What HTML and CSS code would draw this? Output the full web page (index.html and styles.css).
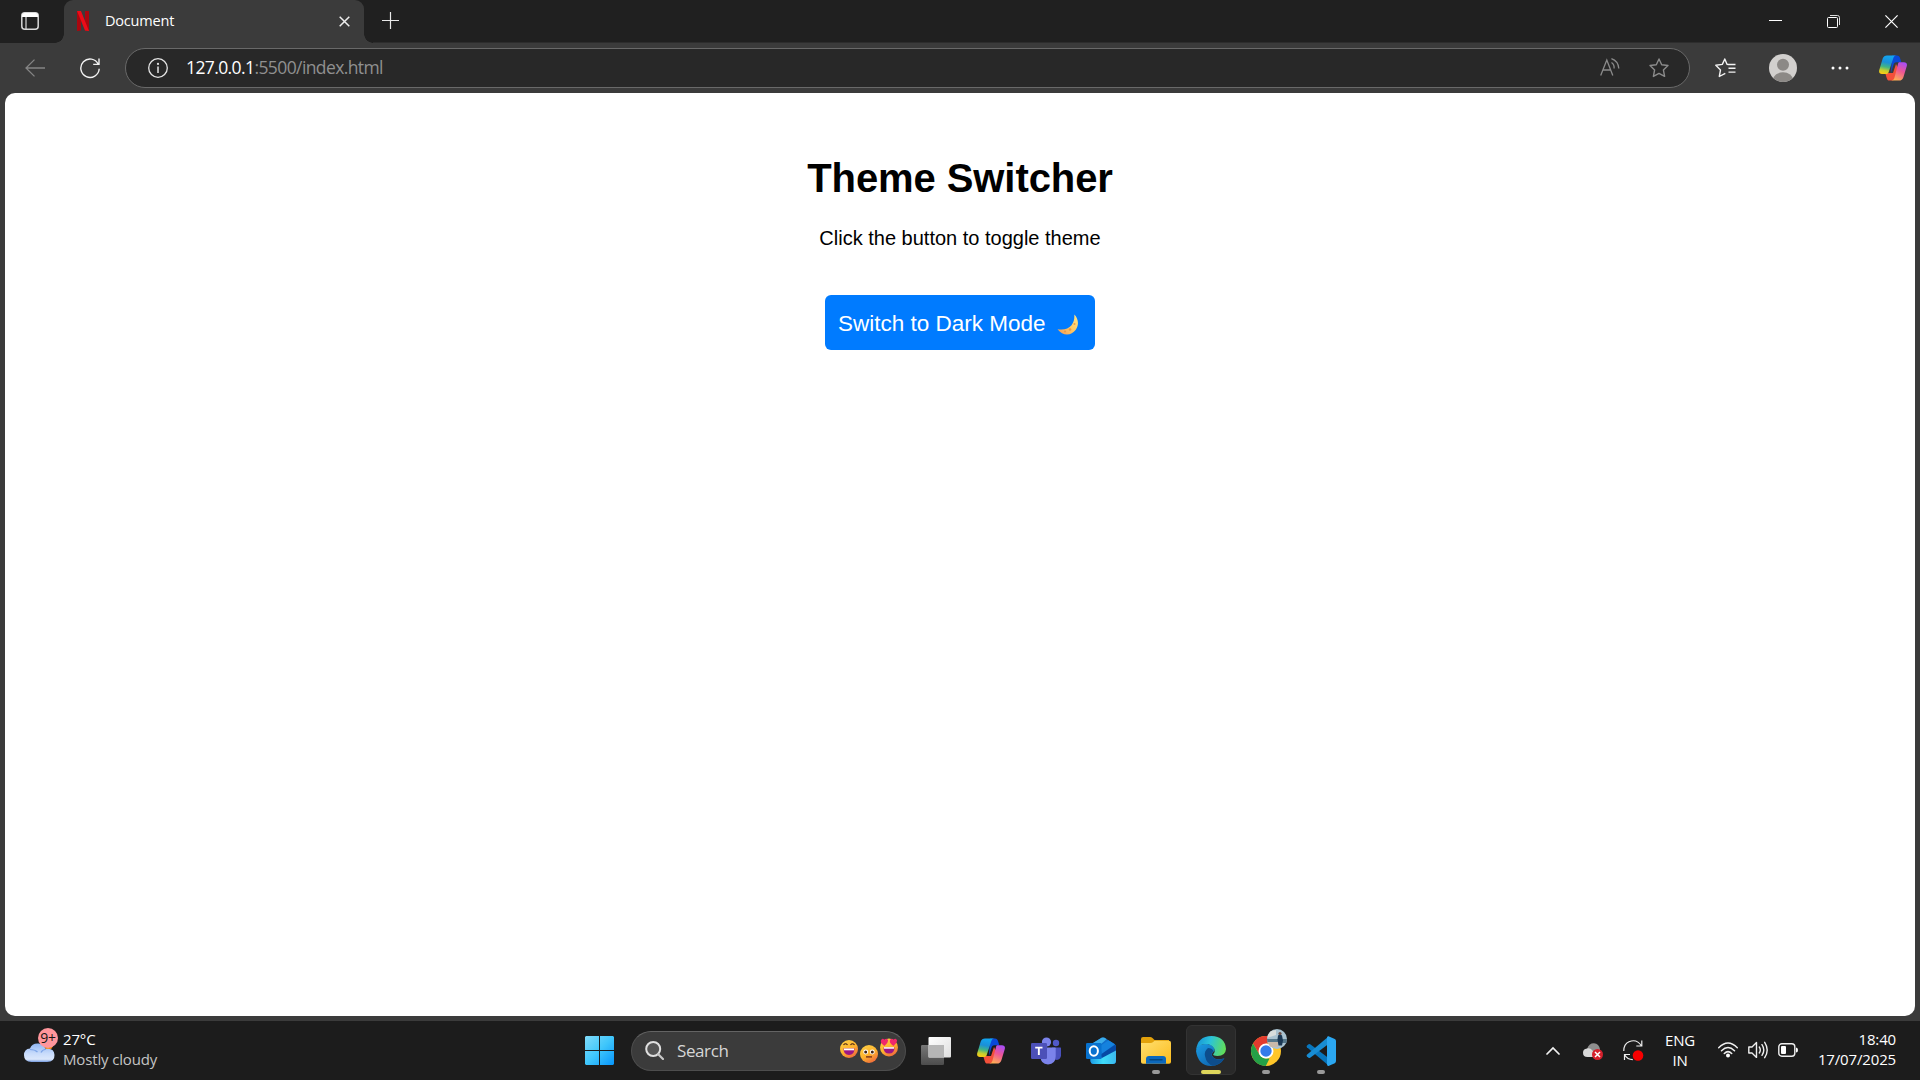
FILE: index.html
```html
<!DOCTYPE html>
<html lang="en">
<head>
<meta charset="utf-8">
<title>Document</title>
<link rel="stylesheet" href="styles.css">
</head>
<body>
<svg class="defs" width="0" height="0" aria-hidden="true">
  <defs>
    <linearGradient id="cpA" x1="0.4" y1="0" x2="0.2" y2="1"><stop offset="0" stop-color="#12a5f0"/><stop offset=".35" stop-color="#1b8fd8"/><stop offset=".6" stop-color="#43b582"/><stop offset=".8" stop-color="#c6cf2e"/><stop offset="1" stop-color="#ffcb12"/></linearGradient>
    <linearGradient id="cpB" x1="0.7" y1="0" x2="0.3" y2="1"><stop offset="0" stop-color="#a94df5"/><stop offset=".45" stop-color="#ee5694"/><stop offset="1" stop-color="#ffb152"/></linearGradient>
    <linearGradient id="face" x1="0" y1="0" x2="0.6" y2="1"><stop offset="0" stop-color="#ffd348"/><stop offset=".6" stop-color="#fdb22d"/><stop offset="1" stop-color="#f0703c"/></linearGradient>
    <linearGradient id="win" x1="0" y1="0" x2="1" y2="1"><stop offset="0" stop-color="#81dcfa"/><stop offset=".5" stop-color="#3fc6fb"/><stop offset="1" stop-color="#0795fb"/></linearGradient>
    <linearGradient id="cloud" x1="0" y1="0" x2="0" y2="1"><stop offset="0" stop-color="#90b5f2"/><stop offset=".55" stop-color="#c9dcfb"/><stop offset=".85" stop-color="#dbe7fb"/><stop offset="1" stop-color="#7299de"/></linearGradient>
    <linearGradient id="moon" x1="1" y1="0" x2="0" y2="1"><stop offset="0" stop-color="#ffe88c"/><stop offset=".5" stop-color="#ffc964"/><stop offset="1" stop-color="#f59b55"/></linearGradient>
    <linearGradient id="folder" x1="0" y1="0" x2="1" y2="1"><stop offset="0" stop-color="#ffdf70"/><stop offset="1" stop-color="#fcbc1c"/></linearGradient>
    <linearGradient id="edgeTop" x1="0" y1="0.3" x2="1" y2="0.5"><stop offset="0" stop-color="#1793d8"/><stop offset=".45" stop-color="#2bc3d9"/><stop offset="1" stop-color="#62dd58"/></linearGradient>
    <linearGradient id="edgeLow" x1="0" y1="0" x2="1" y2="1"><stop offset="0" stop-color="#1b9be3"/><stop offset="1" stop-color="#0c59a4"/></linearGradient>
    <linearGradient id="olLow" x1="0" y1="0" x2="1" y2="0"><stop offset="0" stop-color="#1b9ae4"/><stop offset=".5" stop-color="#3fdcfa"/><stop offset="1" stop-color="#3bb8ee"/></linearGradient>
    <linearGradient id="tv" x1="0" y1="0" x2="1" y2="1"><stop offset="0" stop-color="#fff"/><stop offset="1" stop-color="#dedede"/></linearGradient>
    <linearGradient id="tvBack" x1="0" y1="0" x2="0" y2="1"><stop offset="0" stop-color="#777"/><stop offset="1" stop-color="#4c4c4c"/></linearGradient>
    <symbol id="copilot" viewBox="0 0 28 26">
      <path fill="#0a48d8" d="M13 .4h5c1.700 0 2.600 1 3.200 3l1.100 3.800h-4.800c-2 0-2.600 1.200-3.200 3L12 18z"/>
      <path fill="#f3503a" d="M8 18h6l3-9 2 4-3 10c-.6 1.600-1.700 2.600-3.600 2.600h-2c-1.600 0-2.200-1-2.700-2.600L6.500 19z"/>
      <path fill="url(#cpA)" d="M8 .4h9.500c-2 0-2.700 1.100-3.300 3L9.700 17c-.5 1.400-1.200 2-2.700 2H3C.8 19-.3 17.600.2 15.300L3.700 3.600C4.400 1.300 5.900.4 8 .4z"/>
      <path fill="url(#cpB)" d="M20.500 7.200H25c2.300 0 3.400 1.500 2.800 3.800l-3.400 11.200c-.8 2.400-2.200 3.400-4.400 3.400h-8c2 0 2.900-1 3.500-3L19 9c.3-1.200.6-1.800 1.500-1.800z"/>
    </symbol>
  </defs>
</svg>

<header class="tabstrip">
  <div class="workspaces"><svg width="18" height="18" viewBox="0 0 18 18"><rect x=".8" y=".8" width="16.400" height="16.400" rx="3" fill="none" stroke="#d8d8d8" stroke-width="1.500"/><path d="M1 5V3.500Q1 1 3.500 1h11Q17 1 17 3.500V5z" fill="#fff"/><path d="M5 5v12" stroke="#d8d8d8" stroke-width="1.200"/></svg></div>
  <div class="tab">
    <svg class="favicon" width="12" height="20" viewBox="0 0 12 20"><path fill="#a9070f" d="M0 0h4v19.500L0 20zM8 0h4v20l-4-.5z"/><path fill="#ed0c18" d="M0 0h4l8 20-4-.5z"/></svg>
    <span class="tab-title">Document</span>
    <svg class="tab-close" width="11" height="11" viewBox="0 0 11 11"><path d="M.7.700l9.600 9.600M10.300.700L.7 10.300" stroke="#eee" stroke-width="1.500"/></svg>
  </div>
  <svg class="new-tab" width="17" height="17" viewBox="0 0 17 17"><path d="M8.500 0v17M0 8.500h17" stroke="#e8e8e8" stroke-width="1.200"/></svg>
  <div class="window-controls">
    <svg width="13" height="13" viewBox="0 0 13 13"><path d="M0 5.500h13" stroke="#fff"/></svg>
    <svg width="13" height="13" viewBox="0 0 13 13"><rect x=".5" y="2.500" width="10" height="10" rx="1" fill="none" stroke="#fff"/><path d="M3 .5h7.500q2 0 2 2V10" fill="none" stroke="#ddd"/></svg>
    <svg width="13" height="13" viewBox="0 0 13 13"><path d="M.4.400l12.200 12.200M12.600.400L.4 12.600" stroke="#fff" stroke-width="1.200"/></svg>
  </div>
</header>

<nav class="toolbar">
  <svg class="back" width="20" height="18" viewBox="0 0 20 18"><path d="M20 9H1M9.500.600L1 9l8.500 8.400" fill="none" stroke="#858585" stroke-width="1.300"/></svg>
  <svg class="reload" width="20" height="21" viewBox="0 0 20 21"><path d="M18.300 6.200A9.200 9.200 0 1 0 19.200 10.800M19 .6v5.800h-5.800" fill="none" stroke="#f2f2f2" stroke-width="1.400"/></svg>
  <div class="address">
    <svg class="info" width="20" height="20" viewBox="0 0 20 20"><circle cx="10" cy="10" r="9.300" fill="none" stroke="#e5e5e5" stroke-width="1.300"/><path d="M10 8.500V15" stroke="#e5e5e5" stroke-width="1.500"/><circle cx="10" cy="5.900" r="1.100" fill="#e5e5e5"/></svg>
    <span class="url"><span class="host">127.0.0.1</span>:5500/index.html</span>
    <svg class="read" width="20" height="18" viewBox="0 0 20 18"><path d="M.7 17.500L6.800 2l6 15.500M2.900 12h7.700M11.500 4.500q3 2 2.600 6M11.400.700q6.800 2.300 7.400 9.800" fill="none" stroke="#8b8b8b" stroke-width="1.300"/></svg>
    <svg class="fav" width="20" height="20" viewBox="0 0 20 20"><path d="M10 1l2.700 5.700 6.300.8-4.600 4.400 1.200 6.500-5.600-3-5.600 3 1.200-6.500L1 7.500l6.300-.8z" fill="none" stroke="#8b8b8b" stroke-width="1.400" stroke-linejoin="round"/></svg>
  </div>
  <svg class="favorites" width="21" height="20" viewBox="0 0 21 20"><path d="M13.500 6.500L12 6.200 9.800 1 7.300 6.400.8 7.300l4.700 4.600-1.200 6.600 6-3.200M13 6.500h7.500M13.500 10.300h7M13.500 14.100h7" fill="none" stroke="#f2f2f2" stroke-width="1.400" stroke-linejoin="round"/></svg>
  <svg class="profile" width="28" height="28" viewBox="0 0 28 28"><clipPath id="pc"><circle cx="14" cy="14" r="14"/></clipPath><g clip-path="url(#pc)"><path fill="#d2d0ce" d="M0 0h28v28H0z"/><circle cx="14" cy="10.700" r="6" fill="#8c8986"/><ellipse cx="14" cy="26" rx="10" ry="7.700" fill="#8c8986"/></g></svg>
  <svg class="more" width="18" height="4" viewBox="0 0 18 4"><g fill="#fff"><circle cx="2" cy="2" r="1.500"/><circle cx="9" cy="2" r="1.500"/><circle cx="16" cy="2" r="1.500"/></g></svg>
  <svg class="copilot-side" width="28" height="26"><use href="#copilot"/></svg>
</nav>

<main class="page">
  <h1>Theme Switcher</h1>
  <p>Click the button to toggle theme</p>
  <button class="toggle" type="button"><span>Switch to Dark Mode</span><svg width="22" height="22" viewBox="0 0 22 22"><path fill="url(#moon)" d="M17.300.5C21.500 4.500 22.300 11 18.600 16 14.600 21.500 6 22.600.5 15.200 6.500 16.400 11.500 15 14.500 11.300 17 8 17.600 4.500 17.300.5z"/><g fill="#e99a4b"><circle cx="8" cy="17.500" r="1.100"/><circle cx="13" cy="15.500" r="1.300"/><circle cx="17.500" cy="10" r="1"/></g></svg></button>
</main>

<footer class="taskbar">
  <div class="weather">
    <div class="weather-icon">
      <svg width="32" height="36" viewBox="0 0 32 36"><circle cx="24.500" cy="18" r="4.500" fill="#f88a18"/><path fill="url(#cloud)" d="M7.500 35Q0 35 0 28.300 0 22 6 21.500 8 16 14.500 16.500 20 17 21.500 22q8.500-1.500 9 6 .2 7-7.500 7z"/><path d="M6 22.500q5 0 7.500 2.500M22 22q-4 1-5 3.500" fill="none" stroke="#7da5e8" stroke-width="1.200"/></svg>
      <span class="badge">9+</span>
    </div>
    <div class="weather-text"><span>27°C</span><span class="muted">Mostly cloudy</span></div>
  </div>

  <div class="apps">
    <div class="app"><svg width="29" height="29" viewBox="0 0 29 29"><path fill="url(#win)" d="M1 0h13v14H0V1zM15 0h13l1 1v13H15zM0 15h14v14H1l-1-1zM15 15h14v13l-1 1H15z"/></svg></div>
    <div class="search">
      <svg width="19" height="19" viewBox="0 0 19 19"><circle cx="8.200" cy="8" r="7" fill="#555" stroke="#e0e0e0" stroke-width="2"/><path d="M13 13l5 5" stroke="#c8c8c8" stroke-width="2.200" stroke-linecap="round"/></svg>
      <span>Search</span>
      <svg class="emojis" width="58" height="26" viewBox="0 0 58 26">
        <circle cx="9" cy="11" r="9" fill="url(#face)"/><path d="M3.500 7q2-2.500 4 0M10.500 7q2-2.500 4 0" fill="none" stroke="#4a2413" stroke-width="1.200"/><path fill="#9c1685" d="M3.500 10.500h11Q14.500 17 9 17t-5.500-6.500z"/><path fill="#fff" d="M4 10.500h10v1.800H4z"/>
        <circle cx="29" cy="16" r="9" fill="url(#face)"/><circle cx="25.700" cy="14" r="2.400" fill="#fff"/><circle cx="32.300" cy="14" r="2.400" fill="#fff"/><circle cx="25.700" cy="14" r="1.500" fill="#402518"/><circle cx="32.300" cy="14" r="1.500" fill="#402518"/><path d="M26 18.900h6" stroke="#6b2a18" stroke-width="1.300"/>
        <circle cx="49" cy="9.500" r="9" fill="url(#face)"/><path fill="#9c1685" d="M43.500 9.500h11Q54.500 15.500 49 15.500t-5.500-6z"/><path fill="#fff" d="M44 9.200h10v1.500H44z"/><path fill="#f0276c" d="M44.500 8Q40 4.800 41 2.200 42.700-.5 44.500 1.800 46.800-.5 48 2.200 48.500 5 44.500 8zM53.500 8Q49 4.800 50 2.200 51.500-.5 53.500 1.800 55.500-.5 57 2.200 57.500 5 53.500 8z"/>
      </svg>
    </div>
    <div class="app"><svg width="30" height="28" viewBox="0 0 30 28"><rect y="8" width="23" height="20" rx="1.200" fill="url(#tvBack)"/><rect x="7.500" width="22.500" height="20.500" rx="1" fill="url(#tv)"/><path d="M7.500 8H23v12.500H7.500z" fill="#b6b6b6"/></svg></div>
    <div class="app"><svg width="28" height="26"><use href="#copilot"/></svg></div>
    <div class="app"><svg width="30" height="28" viewBox="0 0 30 28"><circle cx="25" cy="6" r="3.200" fill="#5059c9"/><path fill="#4950bd" d="M21 10.500h8.500q.5 0 .5.800v7Q30 23 24.500 23z"/><circle cx="15.500" cy="5" r="4.600" fill="#7b83eb"/><path fill="#7b83eb" d="M10 10.500h14q.7 0 .7.700V19q0 8-7.700 8.500-7.500-.5-7.500-8z"/><rect y="6" width="16" height="16" rx="1.200" fill="#4c50b8"/><path fill="#fff" d="M4.200 9.800h7.300v1.800H8.800V18H6.900v-6.400H4.200z"/></svg></div>
    <div class="app"><svg width="30" height="28" viewBox="0 0 30 28"><clipPath id="ol"><path d="M4.500 9q0-1.500 1.300-2.300L15.500.8Q17 .1 18.500.8l10 6.200Q30 8 30 10v13.500q0 3.500-3.500 3.500H8q-3.500 0-3.500-3.500z"/></clipPath><g clip-path="url(#ol)"><path fill="#1270cc" d="M4 0h26v28H4z"/><path fill="#3aaceb" d="M4 10V0h19L10 11.500z"/><path fill="#1582de" d="M14 9L24.500 2l6 4L16 17z"/><path fill="#0649a5" d="M14 18L30 7v8L17 22z"/><path fill="url(#olLow)" d="M4 21.500h11L30 13.500V28H4z"/></g><rect y="6" width="15.500" height="16" rx="1.300" fill="#0872cf"/><ellipse cx="7.800" cy="14" rx="4.100" ry="4.700" fill="none" stroke="#fff" stroke-width="2"/></svg></div>
    <div class="app running"><svg width="30" height="27" viewBox="0 0 30 27"><path fill="#e2a10b" d="M0 2Q0 0 2 0h7q1.500 0 2.500 1l2 2H28v8H0z"/><path fill="url(#folder)" d="M0 6h9.500q1.500 0 2.700-1l1.300-1.200H28q2 0 2 2V25q0 1.700-2 1.700H2Q0 26.700 0 25z"/><path fill="#0c68bc" d="M5 26.700V22q0-3 3-3h14q3 0 3 3v4.700z"/><path d="M9 22.700h12" stroke="#054780" stroke-width="1.400" stroke-linecap="round"/></svg></div>
    <div class="app active"><svg width="30" height="30" viewBox="0 0 30 30"><path fill="url(#edgeLow)" d="M0 15Q1 8 9 8c6 0 10 2.500 9.500 7q-3 1.500-2.500 4.500 2 5.500 12.500 2.800Q24 30 15 30 2 29.500 0 15z"/><path fill="#0d4d8c" d="M12 12q-4 3-3 8 1.500 8 8 9.800 7-.8 11.500-7.500-8 3.200-12-1.300-2-3 1-6Q16 12 12 12z"/><path fill="url(#edgeTop)" d="M0 14.500Q1.500 0 15.500 0 29 .5 30 13q-.5 7-8.500 7-4.500 0-4.300-1.700 2.500-2.500 1-5.800Q16 8 9.500 8 2 8.500 0 14.500z"/></svg></div>
    <div class="app running chrome"><svg width="30" height="30" viewBox="0 0 30 30"><circle cx="15" cy="15" r="15" fill="#ffc629"/><path fill="#e33b2e" d="M2 7.500A15 15 0 0 1 28 7.500H15L8.500 18.700z"/><path fill="#24a047" d="M2 7.500l6.500 11.300q2.500 3.700 6.500 3.700h3.500L14.800 30A15 15 0 0 1 2 7.500z"/><circle cx="15" cy="15" r="7.500" fill="#fff"/><circle cx="15" cy="15" r="5.700" fill="#347bea"/></svg>
      <svg class="avatar" width="20" height="20" viewBox="0 0 20 20"><clipPath id="av"><circle cx="10" cy="10" r="10"/></clipPath><g clip-path="url(#av)"><path fill="#a9c2d0" d="M0 0h20v20H0z"/><path fill="#d8dddc" d="M0 3l9-2v5L0 9z"/><path fill="#55778a" d="M0 10h20v4H0z"/><path fill="#c8b9aa" d="M0 13h11v5H0z"/><path fill="#1b3854" d="M11 6.500q2-2 4 0l1 5-1 5h-3.500l-1-6z"/><circle cx="13" cy="4.500" r="1.600" fill="#6b4d43"/></g></svg></div>
    <div class="app running"><svg width="30" height="30" viewBox="0 0 30 30"><path fill="#0876bd" d="M1 9.500l1.500-1.300q.8-.5 1.700 0L22.500 22v7.500L.9 11.200Q.2 10.300 1 9.500z"/><path fill="#188dd4" d="M1 20.500l1.500 1.300q.8.500 1.700 0L22.500 8V.5L.9 18.800q-.7.900.1 1.700z"/><path fill="#2ba7f1" d="M22.500.2l6.300 2.700q1.200.6 1.200 2V25q0 1.500-1.200 2.200l-6.300 2.700q-1.500.2-1.500-1.700V1.800q0-2 1.500-1.600z"/></svg></div>
  </div>

  <div class="tray">
    <svg class="chev" width="14" height="9" viewBox="0 0 14 9"><path d="M1 8l6-6 6 6" fill="none" stroke="#f2f2f2" stroke-width="1.700" stroke-linecap="round"/></svg>
    <svg class="onedrive" width="20" height="17" viewBox="0 0 20 17"><path fill="#8e8e8e" d="M4 6Q6 0 11 .2q5 .3 6 6l-3 6H5z"/><path fill="#d9d9d9" d="M4.500 14Q0 14 0 9.700 0 6 4 5.500q3-1 5.500 2l4 6.500z"/><circle cx="14.500" cy="11.500" r="5.500" fill="#d6202c"/><path d="M12 9l5 5M17 9l-5 5" stroke="#fff" stroke-width="1.500"/></svg>
    <svg class="sync" width="21" height="21" viewBox="0 0 21 21"><path d="M.8 11Q.7 4 6 1.700 14-1.500 18.500 6M18.800.5V6h-5.500M1.500 20v-5.500H7M1.800 15q2.500 4.500 8 4.700" fill="none" stroke="#eee" stroke-width="1.200"/><circle cx="15" cy="15.500" r="5.300" fill="#f80000"/></svg>
    <div class="lang"><span>ENG</span><span>IN</span></div>
    <svg class="wifi" width="20" height="16" viewBox="0 0 20 16"><path d="M.7 5.800Q10-3.800 19.300 5.800M3.500 8.700q6.500-6.500 13 0M6.300 11.500q3.700-3.700 7.400 0" fill="none" stroke="#eee" stroke-width="1.500" stroke-linecap="round"/><circle cx="10" cy="13.600" r="2" fill="#fff"/></svg>
    <svg class="sound" width="20" height="18" viewBox="0 0 20 18"><path d="M.8 6H4l4.500-4.400v14.800L4 12H.8zM11.300 6q2 3 0 6M14 3.700q3.600 5.300 0 10.600M16.700 1.300q5 7.700 0 15.400" fill="none" stroke="#eee" stroke-width="1.400" stroke-linejoin="round" stroke-linecap="round"/></svg>
    <svg class="battery" width="20" height="14" viewBox="0 0 20 14"><rect x=".8" y=".8" width="16" height="12.400" rx="3" fill="none" stroke="#eee" stroke-width="1.400"/><rect x="3" y="3" width="5" height="8" rx="1" fill="#fff"/><path d="M18 4.500q2 0 2 2.500t-2 2.500z" fill="#fff"/></svg>
    <div class="clock"><span>18:40</span><span>17/07/2025</span></div>
  </div>
</footer>
</body>
</html>
```
FILE: styles.css
```css
* { box-sizing: border-box; }

body {
  margin: 0;
  width: 1920px;
  height: 1080px;
  overflow: hidden;
  display: flex;
  flex-direction: column;
  background: #3b3b3b;
  color: #fff;
  font-family: "Open Sans", "Noto Sans", sans-serif;
}

svg { display: block; flex: none; }
.defs { position: absolute; }

/* Tab strip */
.tabstrip {
  flex: none;
  display: flex;
  height: 43px;
  background: linear-gradient(#202020 42px, #2d2d2d 42px);
}
.workspaces { width: 64px; padding: 12px 0 0 21px; background: #202020; border-bottom-right-radius: 9px; }
.tab {
  position: relative;
  display: flex;
  width: 300px;
  padding: 11px 14px 0 13px;
  background: #3b3b3b;
  border-radius: 9px 9px 0 0;
}
.tab::before, .tab::after {
  content: "";
  position: absolute;
  bottom: 0;
  width: 9px;
  height: 9px;
}
.tab::before { left: -9px; background: radial-gradient(circle at 0 0, #202020 8.5px, #3b3b3b 9px); }
.tab::after { right: -9px; background: radial-gradient(circle at 100% 0, #202020 8.5px, #3b3b3b 9px); }
.tab-title { margin: 0 0 0 16px; font-size: 14.5px; line-height: 20px; letter-spacing: -0.2px; }
.tab-close { margin: 5px 0 0 auto; }
.new-tab { margin: 12px 0 0 18px; }
.window-controls { display: flex; gap: 45px; margin: 15px 22px 0 auto; }

/* Toolbar */
.toolbar { flex: none; display: flex; align-items: center; height: 50px; }
.back { margin-left: 25px; }
.reload { margin-left: 35px; }
.address {
  display: flex;
  align-items: center;
  width: 1565px;
  height: 40px;
  margin-left: 25px;
  padding: 0 20px 0 22px;
  border: 1px solid #696969;
  border-radius: 20px;
  background: #282828;
}
.url { margin: -3px 0 0 18px; color: #909090; font-size: 17.5px; line-height: 24px; letter-spacing: -0.6px; }
.host { color: #fff; }
.read { margin: -2px 0 0 auto; }
.fav { margin-left: 29px; }
.favorites { margin-left: 25px; }
.profile { margin-left: 33px; }
.more { margin-left: 34px; }
.copilot-side { margin-left: 30px; }

/* Web page */
.page {
  flex: none;
  display: flex;
  flex-direction: column;
  align-items: center;
  width: 1910px;
  height: 923px;
  margin: 0 5px;
  padding-top: 62px;
  border-radius: 10px;
  background: #fff;
  color: #000;
  font-family: "Liberation Sans", Arial, sans-serif;
}
.page h1 { margin: 0; font-size: 40px; line-height: 46px; letter-spacing: -0.08px; }
.page p { margin: 26px 0 0; font-size: 20px; line-height: 23px; }
.toggle {
  display: flex;
  width: 270px;
  height: 55px;
  margin-top: 45px;
  padding: 16px 13px;
  border: 0;
  border-radius: 6px;
  background: #007bff;
  color: #fff;
  font: 22.5px/26px "Liberation Sans", Arial, sans-serif;
  white-space: nowrap;
}
.toggle svg { margin: 3px 3px 0 auto; }

/* Taskbar */
.taskbar {
  flex: none;
  display: grid;
  grid-template-columns: 572px 776px 1fr;
  height: 59px;
  margin-top: 5px;
  background: #1c1c1c;
  font-size: 15px;
  line-height: 20px;
  letter-spacing: -0.15px;
}
.taskbar span { white-space: nowrap; }
.weather { display: flex; padding-left: 24px; }
.weather-icon { position: relative; padding-top: 6px; }
.badge {
  position: absolute;
  left: 14px;
  top: 7px;
  width: 20px;
  height: 20px;
  border-radius: 50%;
  background: #ff969c;
  color: #161616;
  font-size: 14px;
  text-align: center;
}
.weather-text { display: flex; flex-direction: column; margin: 8px 0 0 7px; }
.muted { color: #c4c4c4; }

.apps { display: flex; align-items: center; }
.app {
  position: relative;
  display: flex;
  align-items: center;
  justify-content: center;
  width: 55px;
  height: 59px;
}
.app > svg { position: relative; }
.running::after, .active::after {
  content: "";
  position: absolute;
  bottom: 6px;
  width: 8px;
  height: 4px;
  border-radius: 2px;
  background: #999;
}
.active::after { width: 20px; background: #ded65b; }
.active::before {
  content: "";
  position: absolute;
  inset: 4px 2px 5px 3px;
  border: 1px solid #333;
  border-radius: 6px;
  background: #292929;
}
.chrome > .avatar { position: absolute; left: 29px; top: 8px; }
.search {
  display: flex;
  align-items: center;
  width: 275px;
  height: 40px;
  margin: 0 2px 0 4px;
  padding: 0 7px 0 13px;
  border: 1px solid #4d4d4d;
  border-top-color: #636363;
  border-radius: 20px;
  background: #3b3b3b;
}
.search span { margin-left: 13px; color: #d6d6d6; font-size: 17px; letter-spacing: -0.4px; }
.emojis { margin-left: auto; }

.tray { display: flex; align-items: center; padding-right: 24px; }
.chev { margin-left: 198px; }
.onedrive { margin: 2px 0 0 23px; }
.sync { margin-left: 20px; }
.lang { display: flex; flex-direction: column; align-items: center; width: 34px; margin: -2px 0 0 19px; }
.wifi { margin: -2px 0 0 21px; }
.sound { margin: -1px 0 0 10px; }
.battery { margin: -1px 0 0 10px; }
.clock { display: flex; flex-direction: column; align-items: flex-end; margin: -4px 0 0 auto; }
```
